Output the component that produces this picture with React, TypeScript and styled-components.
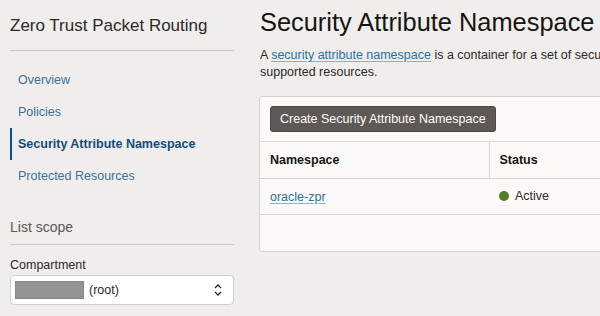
import React from 'react'
import styled, { createGlobalStyle } from 'styled-components'

const GlobalStyle = createGlobalStyle`
    html, body {
        margin: 0;
        padding: 0;
        background: #f0eeec;
    }
    body {
        font-family: "Liberation Sans", Arial, sans-serif;
        color: #161513;
    }
`

const Page = styled.div`
    display: flex;
    width: 600px;
    height: 316px;
    overflow: hidden;
    background: #f0eeec;
`

const Sidebar = styled.aside`
    flex: 0 0 224px;
    margin-left: 10px;
    padding-top: 16px;
    display: flex;
    flex-direction: column;
`

const SideTitle = styled.div`
    font-size: 17px;
    line-height: 20px;
    color: #2b2927;
    white-space: nowrap;
`

const Divider = styled.div<{ $gap?: number }>`
    height: 1px;
    background: #cdcac6;
    margin-top: ${p => p.$gap ?? 14}px;
`

const NavList = styled.nav`
    display: flex;
    flex-direction: column;
    margin-top: 13px;
`

const NavItem = styled.a<{ $active?: boolean }>`
    display: block;
    height: 32px;
    line-height: 32px;
    font-size: 12.5px;
    padding-left: 6px;
    border-left: 2px solid ${p => (p.$active ? '#0f4f80' : 'transparent')};
    color: ${p => (p.$active ? '#0f4d7c' : '#3d7199')};
    font-weight: ${p => (p.$active ? 700 : 400)};
    text-decoration: none;
    white-space: nowrap;
`

const ScopeTitle = styled.div`
    margin-top: 26px;
    font-size: 14px;
    line-height: 18px;
    color: #5a5754;
`

const FieldLabel = styled.div`
    margin-top: 12px;
    font-size: 12.5px;
    line-height: 16px;
    color: #2b2927;
`

const Select = styled.div`
    margin-top: 2px;
    height: 30px;
    box-sizing: border-box;
    border: 1px solid #d2cfcb;
    border-radius: 4px;
    background: #fff;
    display: flex;
    align-items: center;
    padding: 0 10px 0 4px;
`

const Redacted = styled.span`
    width: 69px;
    height: 18px;
    background: #939393;
    border: 1px solid #888;
    box-sizing: border-box;
`

const SelectText = styled.span`
    margin-left: 5px;
    font-size: 12.5px;
    color: #2b2927;
    flex: 1;
`

const Main = styled.main`
    flex: 0 0 720px;
    margin-left: 26px;
    padding-top: 7px;
`

const Title = styled.h1`
    margin: 0;
    font-size: 25.4px;
    line-height: 30px;
    font-weight: 400;
    color: #161513;
    white-space: nowrap;
`

const Intro = styled.p`
    margin: 10px 0 0;
    width: 590px;
    font-size: 12.5px;
    line-height: 17px;
    color: #2b2927;
`

const TextLink = styled.a`
    color: #2f6f9a;
    text-decoration: underline;
    text-decoration-color: #8fb0c8;
    text-underline-offset: 2px;
`

const Card = styled.section`
    margin-top: 15px;
    margin-left: -1px;
    background: #fbfaf9;
    border: 1px solid #d7d4d0;
    border-radius: 3px;
`

const Toolbar = styled.div`
    padding: 9px 10px;
    display: flex;
`

const Button = styled.button`
    height: 26px;
    padding: 0 9px;
    background: #5f5854;
    border: 1px solid #4c4642;
    border-radius: 3px;
    color: #fff;
    font-family: inherit;
    font-size: 12.5px;
`

const Table = styled.table`
    width: 100%;
    table-layout: fixed;
    border-collapse: collapse;
`

const Th = styled.th<{ $width?: number }>`
    width: ${p => (p.$width ? `${p.$width}px` : 'auto')};
    height: 36px;
    padding: 0 10px;
    text-align: left;
    font-size: 12.5px;
    font-weight: 700;
    color: #161513;
    border-top: 1px solid #dcd9d5;
    border-bottom: 1px solid #d7d4d0;
    & + & {
        border-left: 1px solid #d7d4d0;
    }
`

const Td = styled.td`
    height: 35px;
    padding: 0 10px;
    font-size: 12.5px;
    color: #2b2927;
    border-bottom: 1px solid #d7d4d0;
`

const Status = styled.span`
    display: inline-flex;
    align-items: center;
    gap: 6px;
`

const Dot = styled.span<{ $color: string }>`
    width: 10px;
    height: 10px;
    border-radius: 50%;
    background: ${p => p.$color};
`

const Empty = styled.div`
    height: 36px;
`

const Chevrons = () => (
    <svg width="10" height="14" viewBox="0 0 10 14" fill="none" stroke="#2b2927" strokeWidth="1.3">
        <path d="M2 5 L5 2 L8 5" />
        <path d="M2 9 L5 12 L8 9" />
    </svg>
)

const navItems = ['Overview', 'Policies', 'Security Attribute Namespace', 'Protected Resources']

export default function App() {
    return (
        <Page>
            <GlobalStyle />
            <Sidebar>
                <SideTitle>Zero Trust Packet Routing</SideTitle>
                <Divider />
                <NavList>
                    {navItems.map(item => (
                        <NavItem key={item} href="#" $active={item === 'Security Attribute Namespace'}>
                            {item}
                        </NavItem>
                    ))}
                </NavList>
                <ScopeTitle>List scope</ScopeTitle>
                <Divider $gap={8} />
                <FieldLabel>Compartment</FieldLabel>
                <Select>
                    <Redacted />
                    <SelectText>(root)</SelectText>
                    <Chevrons />
                </Select>
            </Sidebar>
            <Main>
                <Title>Security Attribute Namespace</Title>
                <Intro>
                    A <TextLink href="#">security attribute namespace</TextLink> is a container for a set of security
                    attributes that can be applied to supported resources.
                </Intro>
                <Card>
                    <Toolbar>
                        <Button>Create Security Attribute Namespace</Button>
                    </Toolbar>
                    <Table>
                        <colgroup>
                            <col style={{ width: 229 }} />
                            <col />
                        </colgroup>
                        <thead>
                            <tr>
                                <Th>Namespace</Th>
                                <Th>Status</Th>
                            </tr>
                        </thead>
                        <tbody>
                            <tr>
                                <Td>
                                    <TextLink href="#">oracle-zpr</TextLink>
                                </Td>
                                <Td>
                                    <Status>
                                        <Dot $color="#528127" />
                                        Active
                                    </Status>
                                </Td>
                            </tr>
                        </tbody>
                    </Table>
                    <Empty />
                </Card>
            </Main>
        </Page>
    )
}
